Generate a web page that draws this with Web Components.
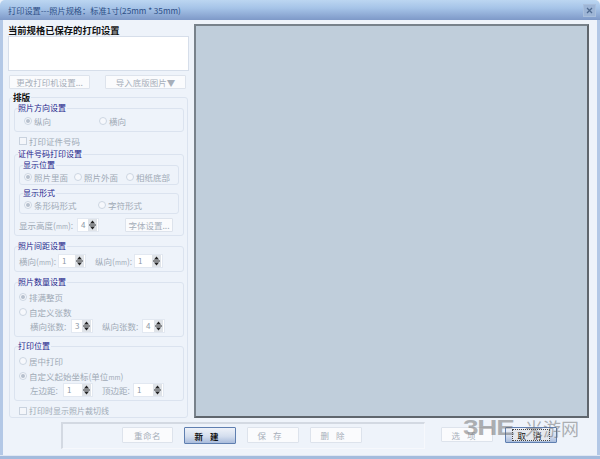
<!DOCTYPE html>
<html>
<head>
<meta charset="utf-8">
<style>
  html, body { margin: 0; padding: 0; background: #eef3fa; }
  body { font: 8.5px/12px "Noto Sans CJK SC", "Liberation Sans", sans-serif; color: #a0aab6; }
  .mm { font-size: 6.5px; }
</style>
</head>
<body>
<print-window heading="打印设置---照片规格：标准1寸(25mm * 35mm)">
  <div slot="left">
    <div style="font:bold 9.3px/12px 'Noto Sans CJK SC',sans-serif;color:#111">当前规格已保存的打印设置</div>
    <div style="width:179px;height:33px;background:#fff;border:1px solid #d6deea"></div>
    <div style="display:flex;gap:15px;margin:4px 0 0 1px">
      <win-button style="width:81px;height:14px">更改打印机设置...</win-button>
      <win-button style="width:81px;height:14px">导入底版图片▼</win-button>
    </div>
    <group-box bold label="排版" style="width:173px;height:309px;margin:8px 0 0 1px;padding:10px 0 0 4px">
      <group-box label="照片方向设置" style="width:159px;height:16px;padding:6px 0 0 9px">
        <opt-row>
          <radio-opt checked style="width:75px">纵向</radio-opt>
          <radio-opt>横向</radio-opt>
        </opt-row>
      </group-box>
      <check-opt style="margin:3px 0 0 5px">打印证件号码</check-opt>
      <group-box label="证件号码打印设置" style="width:164px;height:70px;margin-top:7px;padding:10px 0 0 4px">
        <group-box label="显示位置" style="width:154px;height:13px;padding:5px 0 0 4px">
          <opt-row>
            <radio-opt checked style="width:50px">照片里面</radio-opt>
            <radio-opt style="width:52px">照片外面</radio-opt>
            <radio-opt>相纸底部</radio-opt>
          </opt-row>
        </group-box>
        <group-box label="显示形式" style="width:154px;height:14px;margin-top:8px;padding:5px 0 0 4px">
          <opt-row>
            <radio-opt checked style="width:74px">条形码形式</radio-opt>
            <radio-opt>字符形式</radio-opt>
          </opt-row>
        </group-box>
        <div style="display:flex;align-items:center;height:14px;margin-top:4px">
          <span style="width:58px;white-space:nowrap">显示高度(<span class="mm">mm</span>):</span>
          <spin-box value="4" style="width:22px"></spin-box>
          <win-button style="width:48px;height:14px;margin-left:26px">字体设置...</win-button>
        </div>
      </group-box>
      <group-box label="照片间距设置" style="width:164px;height:17px;margin-top:10px;padding:7px 0 0 4px">
        <div style="display:flex;align-items:center;height:14px">
          <span style="width:39px;white-space:nowrap">横向(<span class="mm">mm</span>):</span>
          <spin-box value="1" style="width:28px"></spin-box>
          <span style="width:39px;margin-left:9px;white-space:nowrap">纵向(<span class="mm">mm</span>):</span>
          <spin-box value="1" style="width:29px"></spin-box>
        </div>
      </group-box>
      <group-box label="照片数量设置" style="width:164px;height:45px;margin-top:10px;padding:8px 0 0 4px">
        <radio-opt checked>排满整页</radio-opt>
        <radio-opt style="margin-top:3px">自定义张数</radio-opt>
        <div style="display:flex;align-items:center;height:14px;margin:1px 0 0 11px">
          <span style="width:41px;white-space:nowrap">横向张数:</span>
          <spin-box value="3" style="width:22px"></spin-box>
          <span style="width:40px;margin-left:9px;white-space:nowrap">纵向张数:</span>
          <spin-box value="4" style="width:23px"></spin-box>
        </div>
      </group-box>
      <group-box label="打印位置" style="width:164px;height:45px;margin-top:9px;padding:8px 0 0 4px">
        <radio-opt>居中打印</radio-opt>
        <radio-opt checked style="margin-top:3px">自定义起始坐标(单位<span class="mm">mm</span>)</radio-opt>
        <div style="display:flex;align-items:center;height:14px;margin:1px 0 0 11px">
          <span style="width:33px;white-space:nowrap">左边距:</span>
          <spin-box value="1" style="width:30px"></spin-box>
          <span style="width:31px;margin-left:9px;white-space:nowrap">顶边距:</span>
          <spin-box value="1" style="width:31px"></spin-box>
        </div>
      </group-box>
      <check-opt style="margin:4px 0 0 5px;font-size:8px">打印时显示照片裁切线</check-opt>
    </group-box>
  </div>
  <div slot="footer" style="display:flex;flex:1">
    <div style="width:364px;height:27px;box-sizing:border-box;margin-left:58px;padding:3px 0 0 59px;display:flex;gap:11px;border-top:2px solid #d3d9e2;border-left:2px solid #d3d9e2;border-right:1px solid #f6f8fc;border-bottom:1px solid #f6f8fc">
      <win-button style="width:51px;height:16px;letter-spacing:.5px">重命名</win-button>
      <win-button primary style="width:52px;height:17px;letter-spacing:7px">新建</win-button>
      <win-button style="width:52px;height:16px;letter-spacing:7px">保存</win-button>
      <win-button style="width:52px;height:16px;letter-spacing:7px">删除</win-button>
    </div>
    <div style="display:flex;gap:12px;margin:5px 0 0 16px">
      <win-button style="width:52px;height:15px;letter-spacing:7px">选项</win-button>
      <win-button primary focus style="width:52px;height:16px;letter-spacing:7px">取消</win-button>
    </div>
  </div>
</print-window>

<script>
class PrintWindow extends HTMLElement {
  constructor() {
    super();
    this.attachShadow({ mode: "open" });
    this.shadowRoot.innerHTML = `
    <style>
    :host { display: flex; flex-direction: column; position: relative; width: 600px; height: 459px; overflow: hidden; background: #eef3fa; }
    .title {
      display: flex; align-items: center; justify-content: space-between;
      height: 20px; flex: none; padding: 0 4px 0 8px;
      border-radius: 5px 5px 0 0;
      background: linear-gradient(#bcd6f1, #a6c4e8 40%, #7e99c8);
      font: 8.2px/20px "Noto Sans CJK SC", "Liberation Sans", sans-serif; color: #2d4f86;
    }
    .close { width: 11px; height: 11px; border: 1px solid #a9bfdc; background: #9db5d6; }
    .close svg { display: block; }
    .main { flex: 1; display: flex; gap: 5px; padding: 4px 8px 0 5px; border: solid #b3c8e6; border-width: 0 3px; min-height: 0; box-sizing: border-box; }
    .left { width: 181px; flex: none; }
    .canvas { width: 391px; height: 390px; background: #c0cedb; border: 2px solid; border-color: #78828b #5f666d #5f666d #78828b; }
    .footer { display: flex; height: 33px; flex: none; border: solid #b3c8e6; border-width: 0 3px; box-sizing: border-box; }
    .edge { height: 4px; flex: none; background: #a3bbdd; border-top: 1px solid #dfe7f3; box-sizing: border-box; }
    .mark { position: absolute; left: 463px; top: 416px; display: flex; align-items: center; color: rgba(105,105,105,.5); white-space: nowrap; pointer-events: none; }
    .mark b { font: bold 22px/24px "Liberation Sans", sans-serif; transform: scaleX(1.27); transform-origin: left; width: 62px; letter-spacing: -1px; }
    .mark span { font: 18px/24px "Noto Sans CJK SC", sans-serif; }
    </style>
    <div class="title">
      <span class="heading"></span>
      <span class="close"><svg width="11" height="11" viewBox="0 0 11 11"><path d="M3 3l5 5M8 3l-5 5" stroke="#4f6a90" stroke-width="1.3"/></svg></span>
    </div>
    <div class="main">
      <div class="left"><slot name="left"></slot></div>
      <div class="canvas"></div>
    </div>
    <div class="footer"><slot name="footer"></slot></div>
    <div class="edge"></div>
    <div class="mark"><b>3HE</b><span>米游网</span></div>
    `;
  }
  connectedCallback() {
    this.shadowRoot.querySelector(".heading").textContent = this.getAttribute("heading");
  }
}

class GroupBox extends HTMLElement {
  constructor() {
    super();
    this.attachShadow({ mode: "open" });
    this.shadowRoot.innerHTML = `
    <style>
    :host { display: block; position: relative; border: 1px solid #dbe3ef; border-radius: 3px; box-sizing: content-box; }
    .legend { position: absolute; left: 3px; top: -7px; padding: 0 1px 0 0; background: #eef3fa; font-size: 8px; line-height: 12px; color: #1c1c8a; white-space: nowrap; }
    :host([bold]) .legend { font-weight: bold; font-size: 8.6px; color: #111; }
    </style>
    <span class="legend"></span>
    <slot></slot>
    `;
  }
  connectedCallback() {
    this.shadowRoot.querySelector(".legend").textContent = this.getAttribute("label");
  }
}

class OptRow extends HTMLElement {
  constructor() {
    super();
    this.attachShadow({ mode: "open" });
    this.shadowRoot.innerHTML = `<style>:host { display: flex; }</style><slot></slot>`;
  }
}

class RadioOpt extends HTMLElement {
  constructor() {
    super();
    this.attachShadow({ mode: "open" });
    this.shadowRoot.innerHTML = `
    <style>
    :host { display: flex; align-items: center; gap: 2px; height: 12px; white-space: nowrap; }
    .dot { width: 6px; height: 6px; border: 1px solid #cdd6e2; border-radius: 50%; background: #f6f8fc; display: grid; place-items: center; flex: none; }
    :host([checked]) .dot::after { content: ""; width: 4px; height: 4px; border-radius: 50%; background: #b6c0cd; }
    </style>
    <span class="dot"></span><span><slot></slot></span>
    `;
  }
}

class CheckOpt extends HTMLElement {
  constructor() {
    super();
    this.attachShadow({ mode: "open" });
    this.shadowRoot.innerHTML = `
    <style>
    :host { display: flex; align-items: center; gap: 2px; height: 12px; white-space: nowrap; }
    .box { width: 6px; height: 6px; border: 1px solid #c9d2de; background: #f4f6fa; }
    </style>
    <span class="box"></span><slot></slot>
    `;
  }
}

class SpinBox extends HTMLElement {
  constructor() {
    super();
    this.attachShadow({ mode: "open" });
    this.shadowRoot.innerHTML = `
    <style>
    :host { display: flex; align-items: center; justify-content: space-between; height: 14px; box-sizing: border-box; padding: 0 1px 0 3px; background: #fff; border: 1px solid #e2e8f1; font-size: 8px; color: #8d98a6; }
    svg { display: block; }
    </style>
    <span class="val"></span>
    <svg width="9" height="12" viewBox="0 0 9 12">
      <rect width="9" height="12" fill="#dfe3e8"/>
      <path d="M4.5 1.5L7 4.5H2z" fill="#222"/>
      <path d="M1 6h7" stroke="#333" stroke-width="1"/>
      <path d="M4.5 10.5L2 7.5h5z" fill="#222"/>
    </svg>
    `;
  }
  connectedCallback() {
    this.shadowRoot.querySelector(".val").textContent = this.getAttribute("value");
  }
}

class WinButton extends HTMLElement {
  constructor() {
    super();
    this.attachShadow({ mode: "open" });
    this.shadowRoot.innerHTML = `
    <style>
    :host { display: flex; align-items: center; justify-content: center; flex: none; box-sizing: border-box; background: #fafbfd; border: 1px solid #dde3ec; border-radius: 1px; color: #a7afba; white-space: nowrap; overflow: hidden; }
    :host([primary]) { background: linear-gradient(#eef2f9, #d4deee 55%, #a9bcdc); border-color: #5f7fb0; color: #111; font-weight: bold; }
    :host([focus]) { font-weight: normal; }
    :host([focus]) .in { border: 1px dotted #444; padding: 0 0 0 4px; line-height: 10px; background: #e6e9ee; }
    </style>
    <span class="in"><slot></slot></span>
    `;
  }
}

customElements.define("print-window", PrintWindow);
customElements.define("group-box", GroupBox);
customElements.define("opt-row", OptRow);
customElements.define("radio-opt", RadioOpt);
customElements.define("check-opt", CheckOpt);
customElements.define("spin-box", SpinBox);
customElements.define("win-button", WinButton);
</script>
</body>
</html>
